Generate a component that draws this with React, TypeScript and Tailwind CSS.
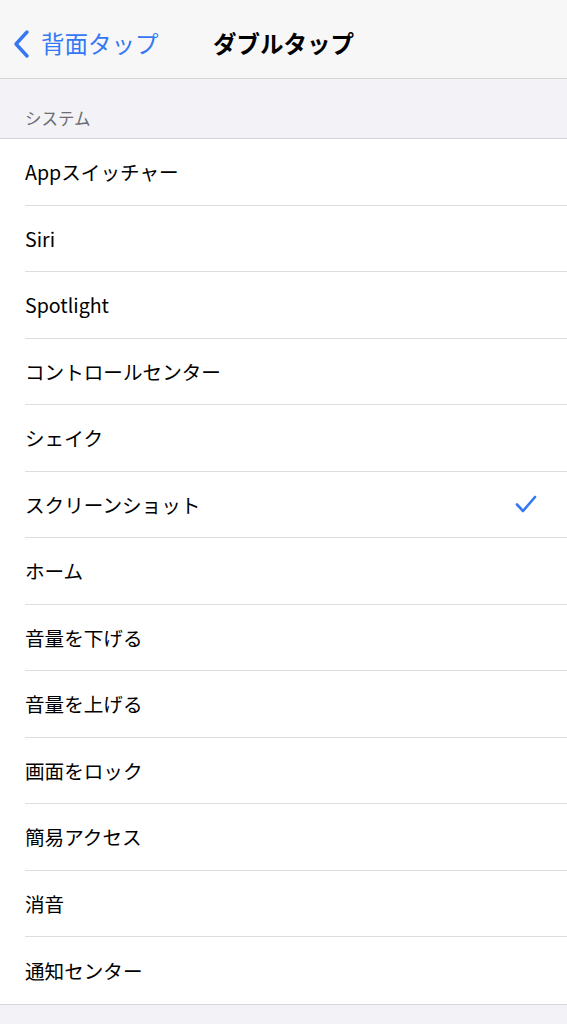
import { FC } from "react"

const items = [
  "Appスイッチャー",
  "Siri",
  "Spotlight",
  "コントロールセンター",
  "シェイク",
  "スクリーンショット",
  "ホーム",
  "音量を下げる",
  "音量を上げる",
  "画面をロック",
  "簡易アクセス",
  "消音",
  "通知センター",
]

const selected = "スクリーンショット"

const Row: FC<{ label: string; last: boolean }> = ({ label, last }) => (
  <div className="flex h-[66.5px] pl-[25px]">
    <div
      className={
        "flex flex-1 items-center justify-between pr-[30px] " +
        (last ? "" : "border-b border-[#dedee2]")
      }
    >
      <span className="text-[19.6px] text-black">{label}</span>
      {label === selected && (
        <svg width="22" height="18" viewBox="0 0 22 18" fill="none">
          <path
            d="M2 9.5 L8 16 L20 2"
            stroke="#3478f6"
            strokeWidth="2.6"
            strokeLinecap="round"
            strokeLinejoin="round"
          />
        </svg>
      )}
    </div>
  </div>
)

const App: FC = () => {
  return (
    <div
      className="min-h-screen w-full bg-[#f2f2f7]"
      style={{ fontFamily: '"Noto Sans CJK JP", "Noto Sans", sans-serif' }}
    >
      <div className="relative flex h-[79px] items-center justify-center border-b border-[#d6d6d8] bg-[#f7f7f7]">
        <div className="absolute left-[12px] top-0 flex h-full items-center gap-[9px] pt-[10px] text-[#3478f6]">
          <svg width="20" height="32" viewBox="0 0 20 32" fill="none">
            <path
              d="M15 4 L4 16 L15 28"
              stroke="#3478f6"
              strokeWidth="3.4"
              strokeLinecap="round"
              strokeLinejoin="round"
            />
          </svg>
          <span className="text-[23.5px]">背面タップ</span>
        </div>
        <span className="pt-[10px] text-[23.5px] font-bold text-black">ダブルタップ</span>
      </div>
      <div className="flex h-[59px] items-end pb-[7px] pl-[25px] text-[16.5px] text-[#6d6d72]">
        システム
      </div>
      <div className="border-y border-[#d6d6d8] bg-white">
        {items.map((label, i) => (
          <Row key={label} label={label} last={i === items.length - 1} />
        ))}
      </div>
    </div>
  )
}

export default App
